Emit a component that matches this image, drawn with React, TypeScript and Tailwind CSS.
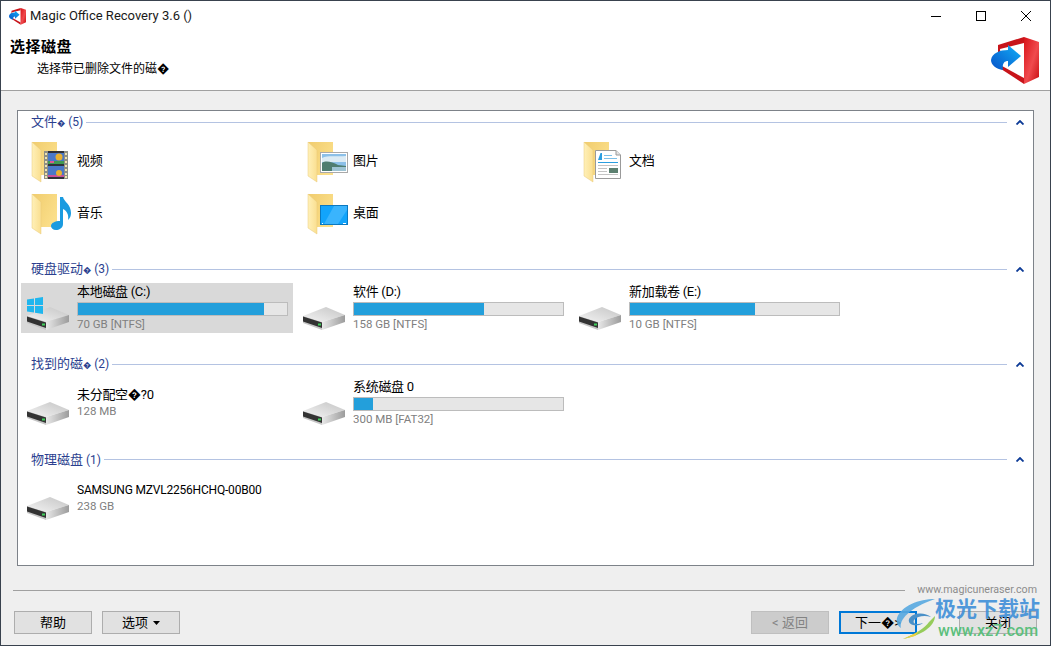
import React from 'react';

const FONT = 'Roboto, "Noto Sans CJK SC", sans-serif';

function Folder({ children }: { children?: React.ReactNode }) {
  return (
    <svg width="48" height="48" viewBox="0 0 48 48" className="shrink-0">
      <defs>
        <linearGradient id="fback" x1="0" y1="0" x2="1" y2="0.6">
          <stop offset="0" stopColor="#f0cc6e" />
          <stop offset="1" stopColor="#fbdf8a" />
        </linearGradient>
        <linearGradient id="fflap" x1="0" y1="0" x2="1" y2="0">
          <stop offset="0" stopColor="#fff0b8" />
          <stop offset="1" stopColor="#fadf90" />
        </linearGradient>
      </defs>
      <path d="M8 5H33V38H17Z" fill="url(#fback)" />
      <path d="M8 5L17 13V45L8 39Z" fill="url(#fflap)" stroke="#e8c878" strokeWidth="0.5" />
      {children}
    </svg>
  );
}

function Film() {
  return (
    <g>
      <rect x="20" y="14" width="24" height="28" fill="#2f3138" />
      <rect x="20" y="14" width="4" height="28" fill="#8f8f86" />
      <rect x="40" y="14" width="4" height="28" fill="#8f8f86" />
      {[16, 20, 24, 28, 32, 36, 39].map((y) => (
        <g key={y}>
          <rect x="21" y={y} width="2" height="2" fill="#f0e4b0" />
          <rect x="41" y={y} width="2" height="2" fill="#f0e4b0" />
        </g>
      ))}
      <rect x="24" y="16" width="16" height="11" fill="#4a78c8" />
      <rect x="24" y="29" width="16" height="11" fill="#4a78c8" />
      <rect x="24" y="24" width="16" height="3" fill="#3f9a52" />
      <rect x="24" y="38" width="16" height="2" fill="#c8509a" />
      <circle cx="35" cy="20" r="3.5" fill="#e8b030" />
      <circle cx="35" cy="36" r="3" fill="#e8b030" />
      <rect x="26" y="24" width="4" height="2" fill="#e05890" />
    </g>
  );
}

function Note() {
  return (
    <path
      d="M37 14H40C41 19 48 21 48 30C48 33 47 35 45 37C46 32 44 28 40 26V41C40 45 36 47 33 47C30 47 28 45 28 43C28 40 32 38 37 38Z"
      transform="translate(-1 -6)"
      fill="#1a9be0"
    />
  );
}

function Photo() {
  return (
    <g>
      <rect x="20.5" y="15.5" width="27" height="20" fill="#fff" stroke="#a9a9a9" />
      <rect x="22" y="17" width="24" height="17" fill="#8cc0e8" />
      <path d="M22 21C28 18 36 20 46 19V25H22Z" fill="#dcebf4" />
      <path d="M22 26C26 23 32 25 38 28L46 29V34H22Z" fill="#4f7d70" />
      <rect x="32" y="30" width="14" height="4" fill="#9ec4d4" />
    </g>
  );
}

function Screen() {
  return (
    <g>
      <rect x="20.5" y="16.5" width="27" height="19" fill="#12a4fb" stroke="#0b78c0" />
      <path d="M34 17H47V21L38 35H24Z" fill="#3ab4fd" />
      <rect x="22" y="34" width="1" height="1" fill="#fff" />
      <rect x="43" y="34" width="3" height="1" fill="#fff" />
    </g>
  );
}

function Doc() {
  return (
    <g>
      <path d="M19.5 13.5H40L44.5 18V41.5H19.5Z" fill="#fff" stroke="#9a9a9a" />
      <path d="M40 13.5V18H44.5" fill="#e4e4e4" stroke="#9a9a9a" />
      <path d="M22 23L24.5 16H26V23Z" fill="#2a9ee0" />
      <rect x="28" y="18" width="8" height="1" fill="#7cc0e8" />
      <rect x="28" y="21" width="13" height="1" fill="#7cc0e8" />
      <rect x="22" y="25" width="20" height="1" fill="#2a9ee0" />
      <rect x="22" y="28" width="20" height="1" fill="#c4c4c4" />
      <rect x="22" y="31" width="9" height="1" fill="#c4c4c4" />
      <rect x="22" y="34" width="9" height="1" fill="#c4c4c4" />
      <rect x="22" y="37" width="20" height="1" fill="#c4c4c4" />
      <rect x="33" y="31" width="9" height="5" fill="#5c8070" />
    </g>
  );
}

function Hdd({ win }: { win?: boolean }) {
  return (
    <svg width="48" height="48" viewBox="0 0 48 48" className="shrink-0">
      <defs>
        <linearGradient id="htop" x1="0" y1="1" x2="1" y2="0">
          <stop offset="0" stopColor="#f4f4f4" />
          <stop offset="1" stopColor="#c4c4c4" />
        </linearGradient>
        <linearGradient id="hside" x1="0" y1="0" x2="1" y2="0">
          <stop offset="0" stopColor="#e8e8e8" />
          <stop offset="1" stopColor="#9c9c9c" />
        </linearGradient>
      </defs>
      {/* top face */}
      <path d="M3 32L26 23L45 31L22 38Z" fill="url(#htop)" />
      {/* right side */}
      <path d="M22 38L45 31V38L22 46Z" fill="url(#hside)" />
      {/* front panel */}
      <path d="M3 32L22 38V46L3 39Z" fill="#c6c6c6" />
      <path d="M3 32.5L22 38.5V44L3 37.5Z" fill="#333333" />
      <rect x="18" y="39.5" width="3" height="2" fill="#3fd05a" />
      {win && (
        <g fill="#1fb6ee">
          <path d="M3 15.5L10 14.5V21H3Z" />
          <path d="M11 14.3L19 13V21H11Z" />
          <path d="M3 22H10V28.5L3 27.5Z" />
          <path d="M11 22H19V30L11 28.7Z" />
        </g>
      )}
    </svg>
  );
}

function Tile({
  icon,
  name,
  size,
  used,
  selected,
  nameClass = 'text-[13px] tracking-[-0.3px]',
}: {
  icon: React.ReactNode;
  name: string;
  size?: string;
  used?: number;
  selected?: boolean;
  nameClass?: string;
}) {
  return (
    <div className={`w-[272px] h-[50px] mr-[4px] flex items-center pl-[3px] gap-[5px] ${selected ? 'bg-[#d9d9d9]' : ''}`}>
      {icon}
      <div className="flex-1 pr-[5px] min-w-0">
        <div className={`leading-[16px] text-black whitespace-nowrap ${size ? '' : '-mt-[1px]'} ${nameClass}`}>{name}</div>
        {used !== undefined && (
          <div className="h-[14px] mt-[2px] border border-[#bcbcbc] bg-[#e6e6e6]">
            <div className="h-full bg-[#239fdb]" style={{ width: `${used}%` }} />
          </div>
        )}
        {size && <div className="text-[11.5px] leading-[16px] text-[#808080] whitespace-nowrap">{size}</div>}
      </div>
    </div>
  );
}

function Section({ title, mark, count, children }: { title: string; mark?: boolean; count: string; children: React.ReactNode }) {
  return (
    <div className="mb-[23px]">
      <div className="h-4 flex items-center pl-[13px] mb-[6px]">
        <span className="text-[13px] leading-4 text-[#2b3f8f] whitespace-nowrap pt-[1px]">
          {title}
          {mark && <span className="text-[8px]">�</span>}
          <span className="text-[12px]"> {count}</span>
        </span>
        <div className="h-px flex-1 bg-[#b4c3e2] ml-[3px]" />
        <svg width="8" height="5" viewBox="0 0 8 5" className="ml-[9px] mr-[9px]">
          <path d="M0.5 4.5L4 1L7.5 4.5" fill="none" stroke="#0c3a96" strokeWidth="1.8" />
        </svg>
      </div>
      <div className="flex flex-wrap gap-y-[2px] pl-[3px]">{children}</div>
    </div>
  );
}

function Btn({ label, variant, children }: { label: string; variant?: 'disabled' | 'focus'; children?: React.ReactNode }) {
  const cls =
    variant === 'disabled'
      ? 'bg-[#cccccc] border-[#bfbfbf] text-[#838383] border'
      : variant === 'focus'
        ? 'bg-[#e1e1e1] border-[#0078d7] border-2 text-black'
        : 'bg-[#e1e1e1] border-[#adadad] border text-black';
  return (
    <button className={`w-[78px] h-[23px] flex items-center justify-center gap-[5px] text-[13px] leading-none ${cls}`}>
      {label}
      {children}
    </button>
  );
}

function AppLogo({ size }: { size: number }) {
  return (
    <svg width={size} height={size} viewBox="0 0 48 48">
      <defs>
        <linearGradient id="lred" x1="0" y1="0" x2="1" y2="1">
          <stop offset="0" stopColor="#d81218" />
          <stop offset="0.55" stopColor="#f04a4e" />
          <stop offset="1" stopColor="#c80c10" />
        </linearGradient>
        <linearGradient id="lblue" x1="1" y1="0" x2="0" y2="1">
          <stop offset="0" stopColor="#12b0f8" />
          <stop offset="1" stopColor="#0652c8" />
        </linearGradient>
      </defs>
      <path d="M7 8L33 0V47L7 30Z" fill="#c8141a" />
      <path d="M9 12L33 6V41L11 29Z" fill="#fff" />
      <path d="M33 0L48 5V40L33 47Z" fill="url(#lred)" />
      <path d="M17 8L30 19L17 30V24C13 24 11 27 12 33C5 32 0 28 0 23C1 16 9 13 17 13Z" fill="url(#lblue)" />
    </svg>
  );
}

export default function App() {
  return (
    <div
      className="relative w-[1051px] h-[646px] overflow-hidden flex flex-col border border-[#39424e] bg-[#efefef]"
      style={{ fontFamily: FONT }}
    >
      {/* title + wizard header */}
      <div className="h-[89px] bg-white border-b border-[#a0a0a0] box-content shrink-0">
        <div className="h-[30px] flex items-center pl-[8px]">
          <AppLogo size={17} />
          <span className="ml-[4px] text-[13px] text-[#1a1a1a] whitespace-nowrap">Magic Office Recovery 3.6 ()</span>
          <div className="flex-1" />
          <svg width="10" height="10" viewBox="0 0 10 10" className="mr-[35px]">
            <path d="M0 5.5H10" stroke="#000" />
          </svg>
          <svg width="10" height="10" viewBox="0 0 10 10" className="mr-[35px]">
            <rect x="0.5" y="0.5" width="9" height="9" fill="none" stroke="#000" />
          </svg>
          <svg width="10" height="10" viewBox="0 0 10 10" className="mr-[19px]">
            <path d="M0 0L10 10M10 0L0 10" stroke="#000" />
          </svg>
        </div>
        <div className="flex">
          <div className="flex-1 pl-[9px]">
            <div className="text-[15px] leading-[20px] font-bold text-black mt-[6px] tracking-[0.5px]">选择磁盘</div>
            <div className="text-[12px] leading-[16px] text-black pl-[27px] mt-[4px]">选择带已删除文件的磁�</div>
          </div>
          <div className="mr-[11px] mt-[6px] h-[48px]">
            <AppLogo size={48} />
          </div>
        </div>
      </div>

      {/* drive list */}
      <div className="mx-[16px] mt-[19px] h-[456px] shrink-0 bg-white border border-[#7d8289] pt-[3px]">
        <Section title="文件" mark count="(5)">
          <Tile name="视频" icon={<Folder><Film /></Folder>} />
          <Tile name="图片" icon={<Folder><Photo /></Folder>} />
          <Tile name="文档" icon={<Folder><Doc /></Folder>} />
          <Tile name="音乐" icon={<Folder><Note /></Folder>} />
          <Tile name="桌面" icon={<Folder><Screen /></Folder>} />
        </Section>
        <Section title="硬盘驱动" mark count="(3)">
          <Tile name="本地磁盘 (C:)" size="70 GB [NTFS]" used={89} selected icon={<Hdd win />} />
          <Tile name="软件 (D:)" size="158 GB [NTFS]" used={62} icon={<Hdd />} />
          <Tile name="新加载卷 (E:)" size="10 GB [NTFS]" used={60} icon={<Hdd />} />
        </Section>
        <Section title="找到的磁" mark count="(2)">
          <Tile name="未分配空�?0" size="128 MB" icon={<Hdd />} />
          <Tile name="系统磁盘 0" size="300 MB [FAT32]" used={9} icon={<Hdd />} />
        </Section>
        <Section title="物理磁盘" count="(1)">
          <Tile name="SAMSUNG MZVL2256HCHQ-00B00" nameClass="text-[12px] tracking-[-0.2px]" size="238 GB" icon={<Hdd />} />
        </Section>
      </div>

      {/* footer */}
      <div className="flex items-center h-4 mt-[16px] pl-[12px] pr-[13px]">
        <div className="flex-1 h-px bg-[#a0a0a0]" />
        <span className="ml-[12px] text-[10.65px] leading-4 text-[#8c8c8c] whitespace-nowrap">www.magicuneraser.com</span>
      </div>
      <div className="flex items-center mt-[13px] pl-[13px] pr-[13px]">
        <Btn label="帮助" />
        <div className="w-[10px]" />
        <Btn label="选项">
          <svg width="7" height="4" viewBox="0 0 7 4">
            <path d="M0 0H7L3.5 4Z" fill="#000" />
          </svg>
        </Btn>
        <div className="flex-1" />
        <Btn label="< 返回" variant="disabled" />
        <div className="w-[10px]" />
        <Btn label="下一�>" variant="focus" />
        <div className="w-[42px]" />
        <Btn label="关闭" />
      </div>

      {/* site watermark over the corner */}
      <div className="absolute left-[894px] top-[595px] w-[156px] h-[48px] pointer-events-none">
        <svg width="44" height="42" viewBox="0 0 44 42" className="absolute left-0 top-[2px]">
          <path d="M40 1C24 1 6 8 2 20C1 25 3 28 6 30C4 22 14 10 40 1Z" fill="#58a8e0" opacity="0.9" />
          <path d="M14 21C18 14 30 14 36 19C30 17 22 18 19 22C17 26 22 27 28 25C24 29 12 28 14 21Z" fill="#4a90c8" />
          <path d="M40 18C40 28 26 38 8 41C20 36 30 30 34 24Z" fill="#8cc84a" opacity="0.9" />
          <path d="M8 41C14 38 20 36 24 33L20 38Z" fill="#f0d040" />
        </svg>
        <div className="absolute left-[40px] top-0 text-[21px] leading-[26px] font-bold text-[#3f8fd8] opacity-90 whitespace-nowrap">极光下载站</div>
        <div className="absolute left-[43px] top-[25px] text-[16px] leading-[20px] font-medium text-[#5cbf7d] whitespace-nowrap">www.xz7.com</div>
      </div>
    </div>
  );
}
